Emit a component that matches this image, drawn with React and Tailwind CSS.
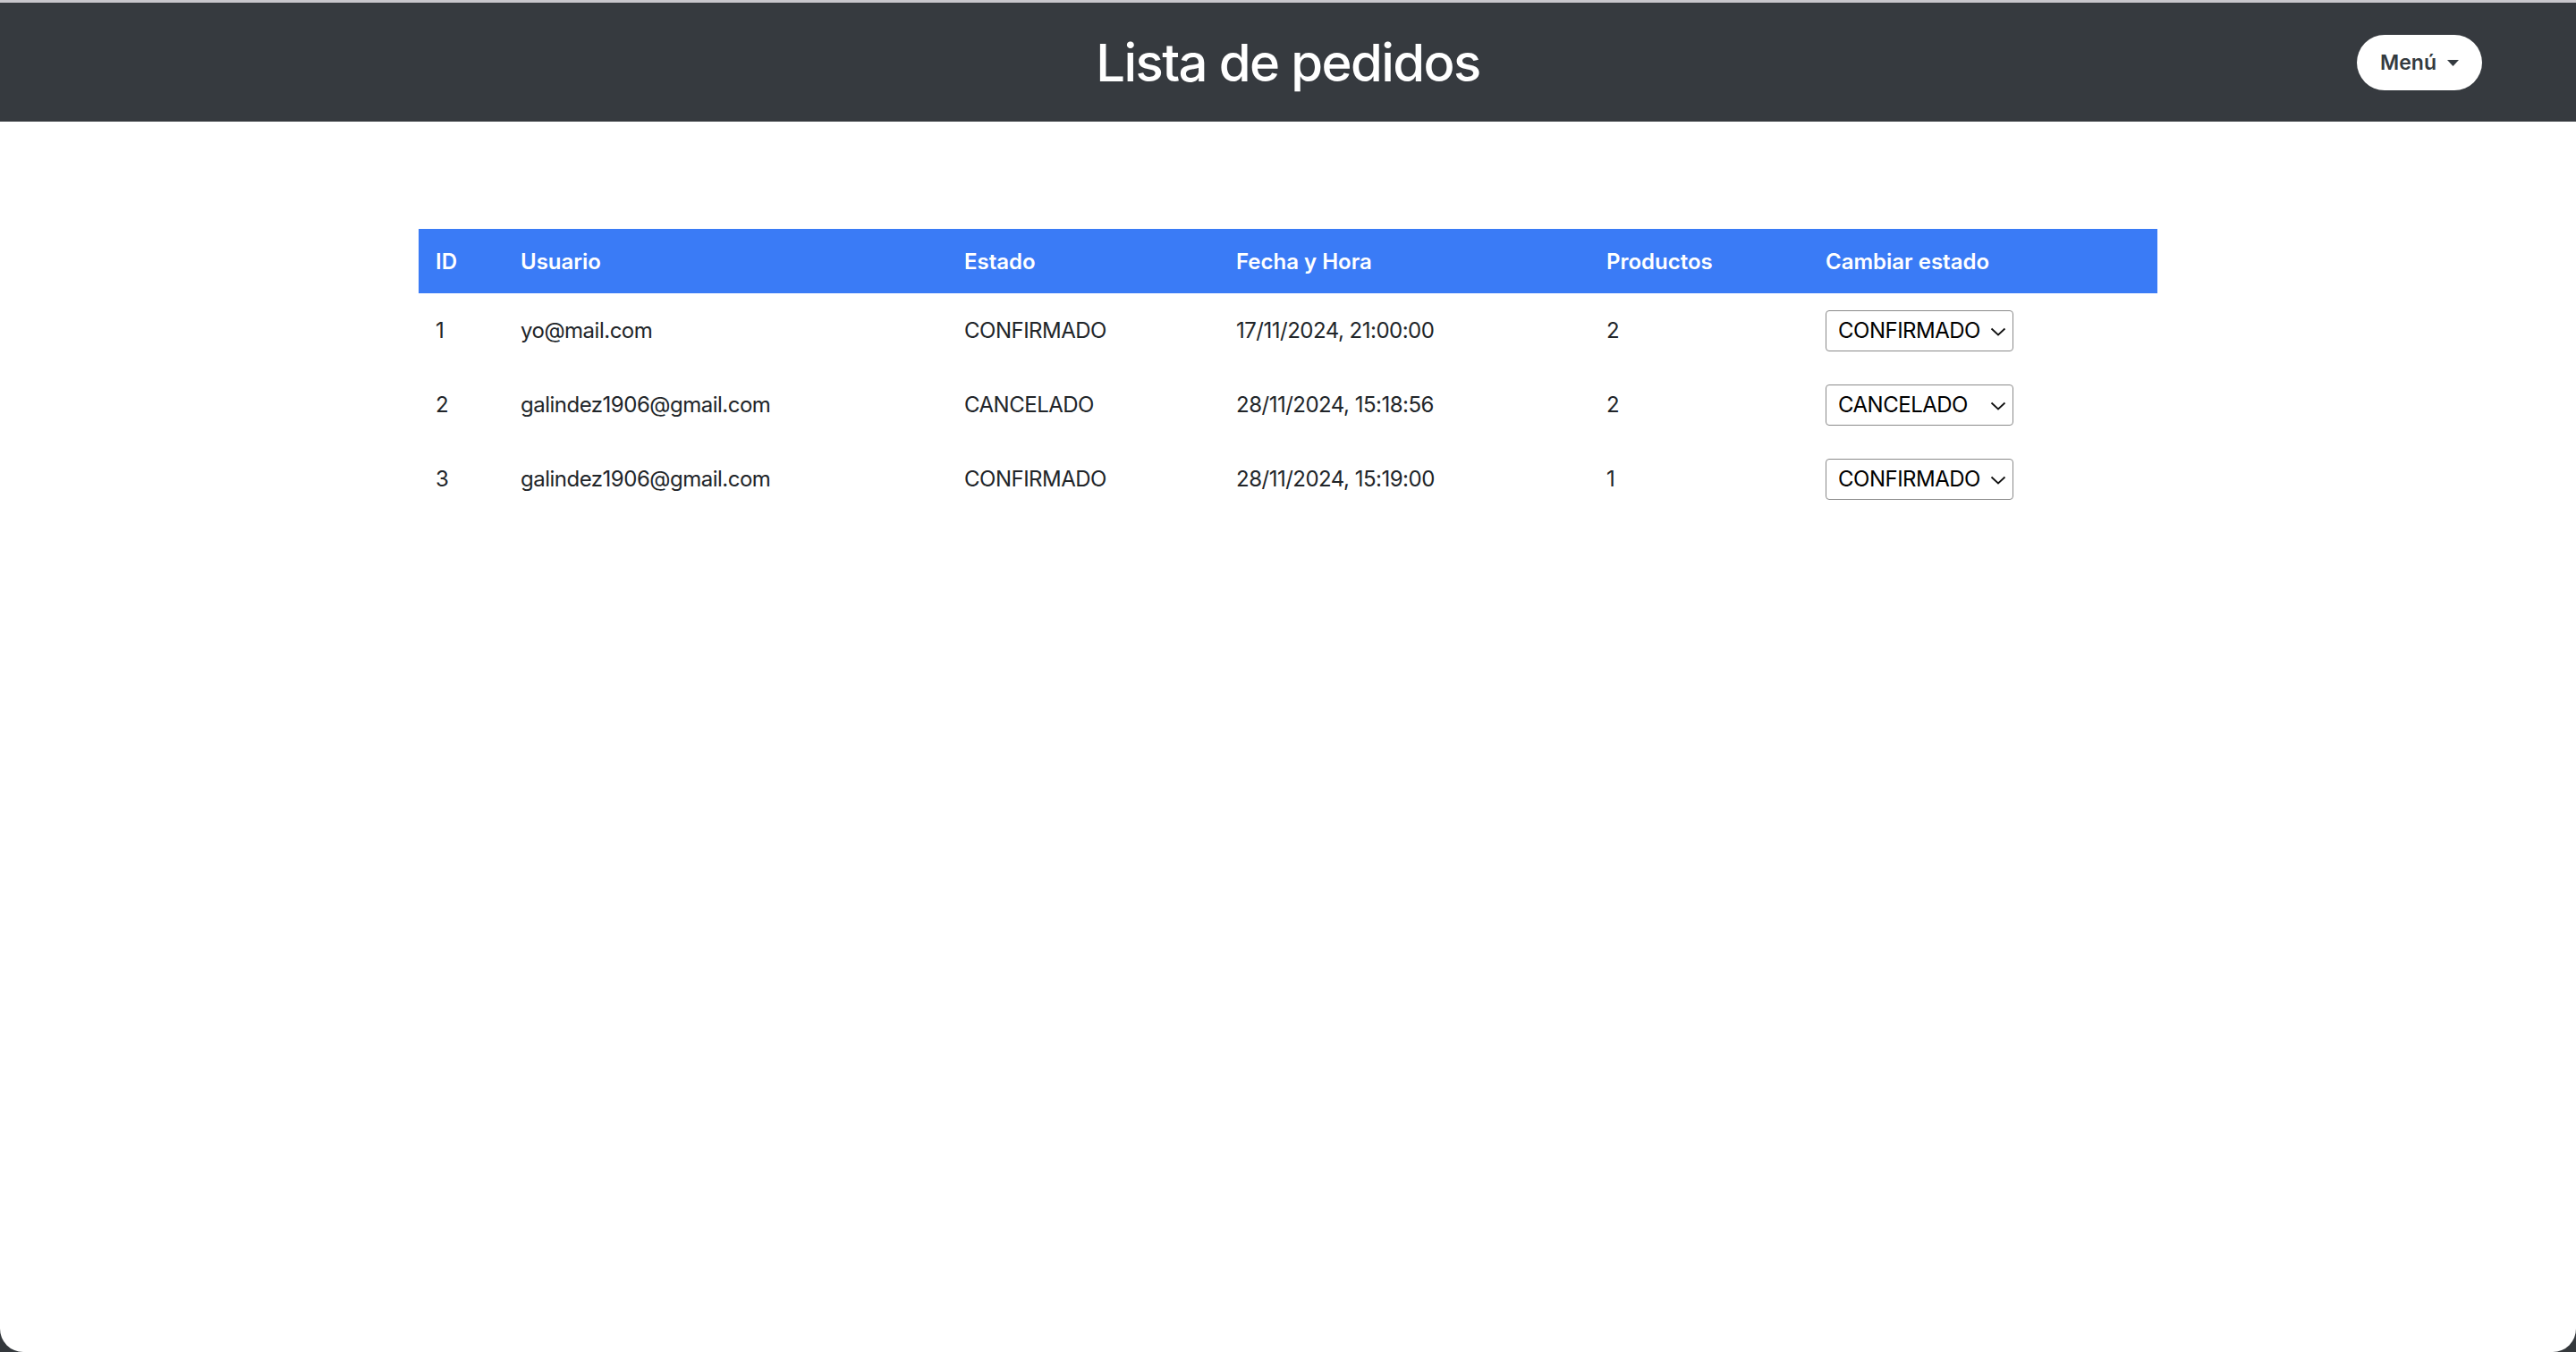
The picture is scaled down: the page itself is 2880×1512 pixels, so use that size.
import React from "react";

const rows = [
  { id: 1, user: "yo@mail.com", estado: "CONFIRMADO", fecha: "17/11/2024, 21:00:00", productos: 2 },
  { id: 2, user: "galindez1906@gmail.com", estado: "CANCELADO", fecha: "28/11/2024, 15:18:56", productos: 2 },
  { id: 3, user: "galindez1906@gmail.com", estado: "CONFIRMADO", fecha: "28/11/2024, 15:19:00", productos: 1 },
];

const cols = ["w-[95px]", "w-[496px]", "w-[304px]", "w-[414px]", "w-[245px]", "w-[390px]"];

function Select({ value }) {
  return (
    <div className="relative w-[210px] h-[46px]">
      <select
        defaultValue={value}
        className="appearance-none w-full h-full border border-[#8a8a8a] rounded-[4px] bg-white pl-[13px] pr-[30px] text-[24px] tracking-[-0.5px] text-black font-['Inter',sans-serif] outline-none"
      >
        <option value="CONFIRMADO">CONFIRMADO</option>
        <option value="CANCELADO">CANCELADO</option>
        <option value="PENDIENTE">PENDIENTE</option>
      </select>
      <svg className="absolute right-[8px] top-[19px] pointer-events-none" width="18" height="10" viewBox="0 0 18 10">
        <path d="M1.5 1.5 L9 8.5 L16.5 1.5" fill="none" stroke="#111" strokeWidth="1.8" />
      </svg>
    </div>
  );
}

export default function App() {
  return (
    <div className="w-[2880px] h-[1512px] bg-[#34383c] font-['Inter',sans-serif] overflow-hidden">
      <div className="h-[3px] bg-[#c9c7cc]" />
      <div className="h-[1509px] bg-white rounded-b-[26px] overflow-hidden flex flex-col">
        <header className="h-[133px] bg-[#363a3f] flex items-center justify-center relative shrink-0">
          <h1 className="text-white text-[58px] font-medium tracking-[-1.6px] leading-none">Lista de pedidos</h1>
          <button className="absolute right-[105px] top-[36px] w-[140px] h-[62px] rounded-full bg-white flex items-center justify-center gap-[12px] text-[#343a40] text-[23px] font-semibold">
            <span>Menú</span>
            <svg width="13" height="7" viewBox="0 0 13 7">
              <path d="M0 0 H13 L6.5 7 Z" fill="#343a40" />
            </svg>
          </button>
        </header>
        <main className="pt-[120px] pl-[468px]">
          <table className="border-collapse w-[1944px] text-[24px] text-[#212529]">
            <thead>
              <tr className="bg-[#3a7bf6] text-white h-[72px]">
                {["ID", "Usuario", "Estado", "Fecha y Hora", "Productos", "Cambiar estado"].map((h, i) => (
                  <th key={h} className={`${cols[i]} text-left font-semibold pl-[19px] p-0 pt-[2px]`}>{h}</th>
                ))}
              </tr>
            </thead>
            <tbody className="tracking-[-0.5px]">
              {rows.map((r) => (
                <tr key={r.id} className="h-[83px]">
                  <td className="pl-[19px]">{r.id}</td>
                  <td className="pl-[19px]">{r.user}</td>
                  <td className="pl-[19px]">{r.estado}</td>
                  <td className="pl-[19px]">{r.fecha}</td>
                  <td className="pl-[19px]">{r.productos}</td>
                  <td className="pl-[19px]"><Select value={r.estado} /></td>
                </tr>
              ))}
            </tbody>
          </table>
        </main>
      </div>
    </div>
  );
}
